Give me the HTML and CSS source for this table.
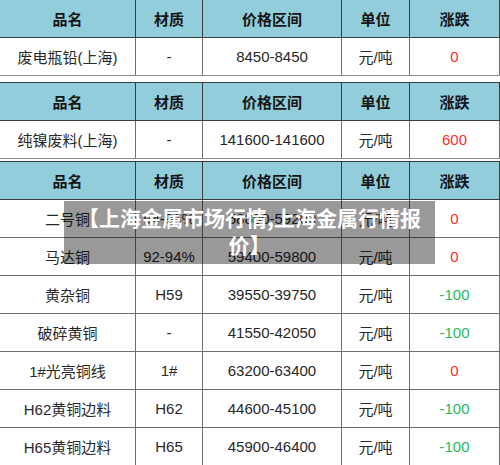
FILE: index.html
```html
<!DOCTYPE html>
<html lang="zh-CN">
<head>
<meta charset="utf-8">
<title>上海金属市场行情</title>
<link rel="stylesheet" href="styles.css">
</head>
<body>
<div class="page">
  <table class="price-table first">
    <colgroup><col class="c1"><col class="c2"><col class="c3"><col class="c4"><col class="c5"></colgroup>
    <thead><tr><th>品名</th><th>材质</th><th>价格区间</th><th>单位</th><th>涨跌</th></tr></thead>
    <tbody>
      <tr><td>废电瓶铅(上海)</td><td>-</td><td>8450-8450</td><td>元/吨</td><td class="up">0</td></tr>
    </tbody>
  </table>
  <table class="price-table second">
    <colgroup><col class="c1"><col class="c2"><col class="c3"><col class="c4"><col class="c5"></colgroup>
    <thead><tr><th>品名</th><th>材质</th><th>价格区间</th><th>单位</th><th>涨跌</th></tr></thead>
    <tbody>
      <tr><td>纯镍废料(上海)</td><td>-</td><td>141600-141600</td><td>元/吨</td><td class="up">600</td></tr>
    </tbody>
  </table>
  <table class="price-table third">
    <colgroup><col class="c1"><col class="c2"><col class="c3"><col class="c4"><col class="c5"></colgroup>
    <thead><tr><th>品名</th><th>材质</th><th>价格区间</th><th>单位</th><th>涨跌</th></tr></thead>
    <tbody>
      <tr><td>二号铜</td><td>94-96%</td><td>58800-59200</td><td>元/吨</td><td class="up">0</td></tr>
      <tr><td>马达铜</td><td>92-94%</td><td>59400-59800</td><td>元/吨</td><td class="up">0</td></tr>
      <tr><td>黄杂铜</td><td>H59</td><td>39550-39750</td><td>元/吨</td><td class="down">-100</td></tr>
      <tr><td>破碎黄铜</td><td>-</td><td>41550-42050</td><td>元/吨</td><td class="down">-100</td></tr>
      <tr><td>1#光亮铜线</td><td>1#</td><td>63200-63400</td><td>元/吨</td><td class="up">0</td></tr>
      <tr><td>H62黄铜边料</td><td>H62</td><td>44600-45100</td><td>元/吨</td><td class="down">-100</td></tr>
      <tr><td>H65黄铜边料</td><td>H65</td><td>45900-46400</td><td>元/吨</td><td class="down">-100</td></tr>
    </tbody>
  </table>
  <div class="caption">【上海金属市场行情,上海金属行情报价】</div>
</div>
</body>
</html>
```

FILE: styles.css
```css
html, body {
  margin: 0;
  padding: 0;
  background: #ffffff;
}

.page {
  position: relative;
  width: 500px;
  height: 465px;
  overflow: hidden;
  font-family: "Liberation Sans", "Noto Sans CJK SC", sans-serif;
}

.price-table {
  width: 500px;
  margin-left: -1px;
  border-collapse: collapse;
  table-layout: fixed;
  font-size: 15px;
  color: #282828;
}

.price-table.first { margin-top: -1px; }
.price-table.second { margin-top: 6px; }
.price-table.third { margin-top: 2px; }

.c1 { width: 136px; }
.c2 { width: 67px; }
.c3 { width: 139px; }
.c4 { width: 68px; }
.c5 { width: 90px; }

.price-table th,
.price-table td {
  height: 37px;
  padding: 0;
  text-align: center;
  vertical-align: middle;
  border: 1px solid #6f6f6f;
  white-space: nowrap;
}

.price-table th {
  background: #92cddc;
  color: #161616;
  font-weight: bold;
  border-color: #3c3c3c;
}

.price-table tbody tr:last-child td {
  border-bottom-color: #8a8a8a;
}

.up { color: #ff2a2a; }
.down { color: #1fba5c; }

.caption {
  position: absolute;
  left: 64px;
  top: 201px;
  width: 371px;
  height: 63px;
  box-sizing: border-box;
  padding: 3px 10px 0;
  background: rgba(0, 0, 0, 0.4);
  color: #ffffff;
  font-family: "Noto Sans CJK SC", sans-serif;
  font-weight: bold;
  font-size: 21px;
  line-height: 27px;
  text-align: center;
}
```
